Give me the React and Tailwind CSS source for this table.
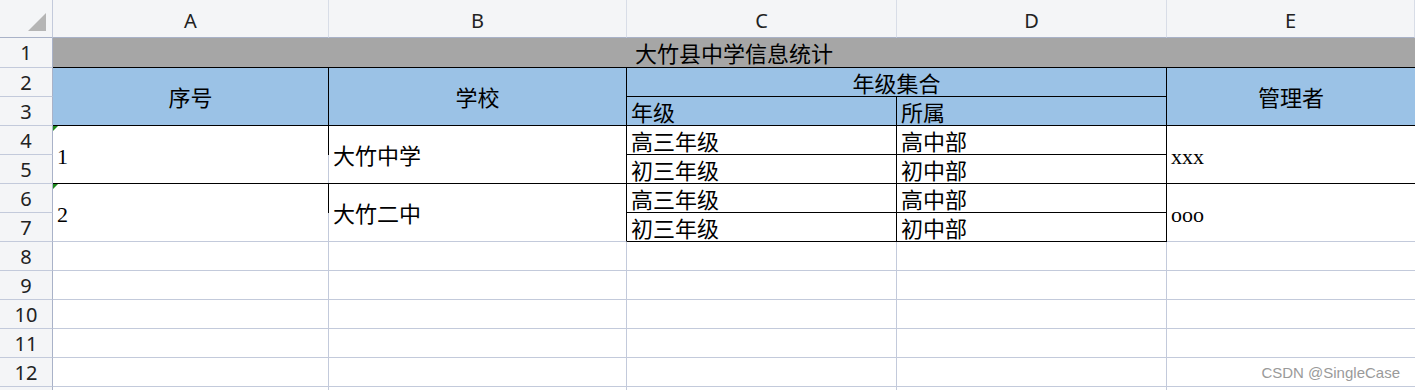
const GRID = 'border-[#c3cadb]';
const DATA_FONT = "font-['Liberation_Serif','Noto_Sans_CJK_SC',serif] text-[22px] text-black";

const schools = [
  {
    no: '1',
    name: '大竹中学',
    grades: [
      ['高三年级', '高中部'],
      ['初三年级', '初中部'],
    ],
    admin: 'xxx',
    last: false,
  },
  {
    no: '2',
    name: '大竹二中',
    grades: [
      ['高三年级', '高中部'],
      ['初三年级', '初中部'],
    ],
    admin: 'ooo',
    last: true,
  },
];

function RowHead({ n }) {
  return (
    <div className="flex items-center justify-center border-r border-b border-r-[#a9b2c8] border-b-[#c3cadb] bg-[#f4f5f7] pt-[1px] font-['Noto_Sans',sans-serif] text-[20px] leading-none text-[#222]">
      {n}
    </div>
  );
}

function Cell({ className = '', children }) {
  return (
    <div
      className={`flex items-center overflow-hidden whitespace-nowrap border-r border-b pt-[5px] leading-none ${DATA_FONT} ${className}`}
    >
      {children}
    </div>
  );
}

// green "number stored as text" marker
function TextFlag() {
  return <span className="absolute left-0 top-0 h-0 w-0 border-t-[5px] border-r-[5px] border-t-[#1e8a1e] border-r-transparent" />;
}

export default function App() {
  const rows = [];
  rows.push(<RowHead key="h1" n={1} />);
  rows.push(
    <Cell key="title" className="col-span-5 justify-center border-r-0 border-b-black bg-[#a6a6a6]">
      大竹县中学信息统计
    </Cell>
  );

  rows.push(<RowHead key="h2" n={2} />);
  rows.push(
    <Cell key="no" className="row-span-2 justify-center border-black bg-[#9bc2e6]">
      序号
    </Cell>
  );
  rows.push(
    <Cell key="school" className="row-span-2 justify-center border-black bg-[#9bc2e6]">
      学校
    </Cell>
  );
  rows.push(
    <Cell key="set" className="col-span-2 justify-center border-black bg-[#9bc2e6]">
      年级集合
    </Cell>
  );
  rows.push(
    <Cell key="admin" className="row-span-2 justify-center border-r-0 border-b-black bg-[#9bc2e6]">
      管理者
    </Cell>
  );
  rows.push(<RowHead key="h3" n={3} />);
  rows.push(
    <Cell key="grade" className="border-black bg-[#9bc2e6] pl-[4px]">
      年级
    </Cell>
  );
  rows.push(
    <Cell key="belong" className="border-black bg-[#9bc2e6] pl-[4px]">
      所属
    </Cell>
  );

  schools.forEach((s, i) => {
    const first = 4 + i * 2;
    const bottom = s.last ? GRID : 'border-b-black';
    rows.push(<RowHead key={`h${first}`} n={first} />);
    rows.push(
      <Cell
        key={`no${i}`}
        className={`relative row-span-2 border-r-0 pl-[4px] ${bottom} bg-[linear-gradient(to_bottom,#000_29px,#c3cadb_29px)] bg-[length:1px_100%] bg-right bg-no-repeat`}
      >
        <TextFlag />
        {s.no}
      </Cell>
    );
    rows.push(
      <Cell key={`name${i}`} className={`row-span-2 border-r-black pl-[4px] ${bottom}`}>
        {s.name}
      </Cell>
    );
    rows.push(
      <Cell key={`g${i}0`} className="border-black pl-[4px]">
        {s.grades[0][0]}
      </Cell>
    );
    rows.push(
      <Cell key={`b${i}0`} className="border-black pl-[4px]">
        {s.grades[0][1]}
      </Cell>
    );
    rows.push(
      <Cell key={`a${i}`} className={`row-span-2 border-r-0 pl-[4px] ${bottom}`}>
        {s.admin}
      </Cell>
    );
    rows.push(<RowHead key={`h${first + 1}`} n={first + 1} />);
    rows.push(
      <Cell key={`g${i}1`} className="border-black pl-[4px]">
        {s.grades[1][0]}
      </Cell>
    );
    rows.push(
      <Cell key={`b${i}1`} className="border-black pl-[4px]">
        {s.grades[1][1]}
      </Cell>
    );
  });

  // row 13 only peeks in at the bottom edge, so no number there
  for (let r = 8; r <= 13; r++) {
    rows.push(<RowHead key={`h${r}`} n={r < 13 ? r : ''} />);
    ['A', 'B', 'C', 'D', 'E'].forEach((c) => {
      rows.push(<Cell key={`${c}${r}`} className={`${GRID} ${c === 'E' ? 'border-r-0' : ''}`} />);
    });
  }

  return (
    <div className="relative h-[390px] w-[1415px] overflow-hidden bg-white">
      <div className="grid grid-cols-[53px_276px_298px_270px_270px_1fr] grid-rows-[38px_30px_repeat(12,29px)]">
        <div className="flex items-end justify-end border-r border-b border-r-[#c3cadb] border-b-[#a9b2c8] bg-[#f4f5f7] pr-[6px] pb-[6px]">
          <svg width="18" height="18" viewBox="0 0 18 18">
            <polygon points="18,0 18,18 0,18" fill="#b5b5b5" />
          </svg>
        </div>
        {['A', 'B', 'C', 'D', 'E'].map((c) => (
          <div
            key={c}
            className="flex items-center justify-center border-r border-b border-r-[#d8dde7] border-b-[#a9b2c8] bg-[#f4f5f7] pt-[5px] font-['Noto_Sans',sans-serif] text-[20px] leading-none text-[#222]"
          >
            {c}
          </div>
        ))}
        {rows}
      </div>
      <div className="absolute right-[15px] bottom-[10px] font-['Liberation_Sans',sans-serif] text-[15px] leading-none text-[#9a9a9a]">
        CSDN @SingleCase
      </div>
    </div>
  );
}
